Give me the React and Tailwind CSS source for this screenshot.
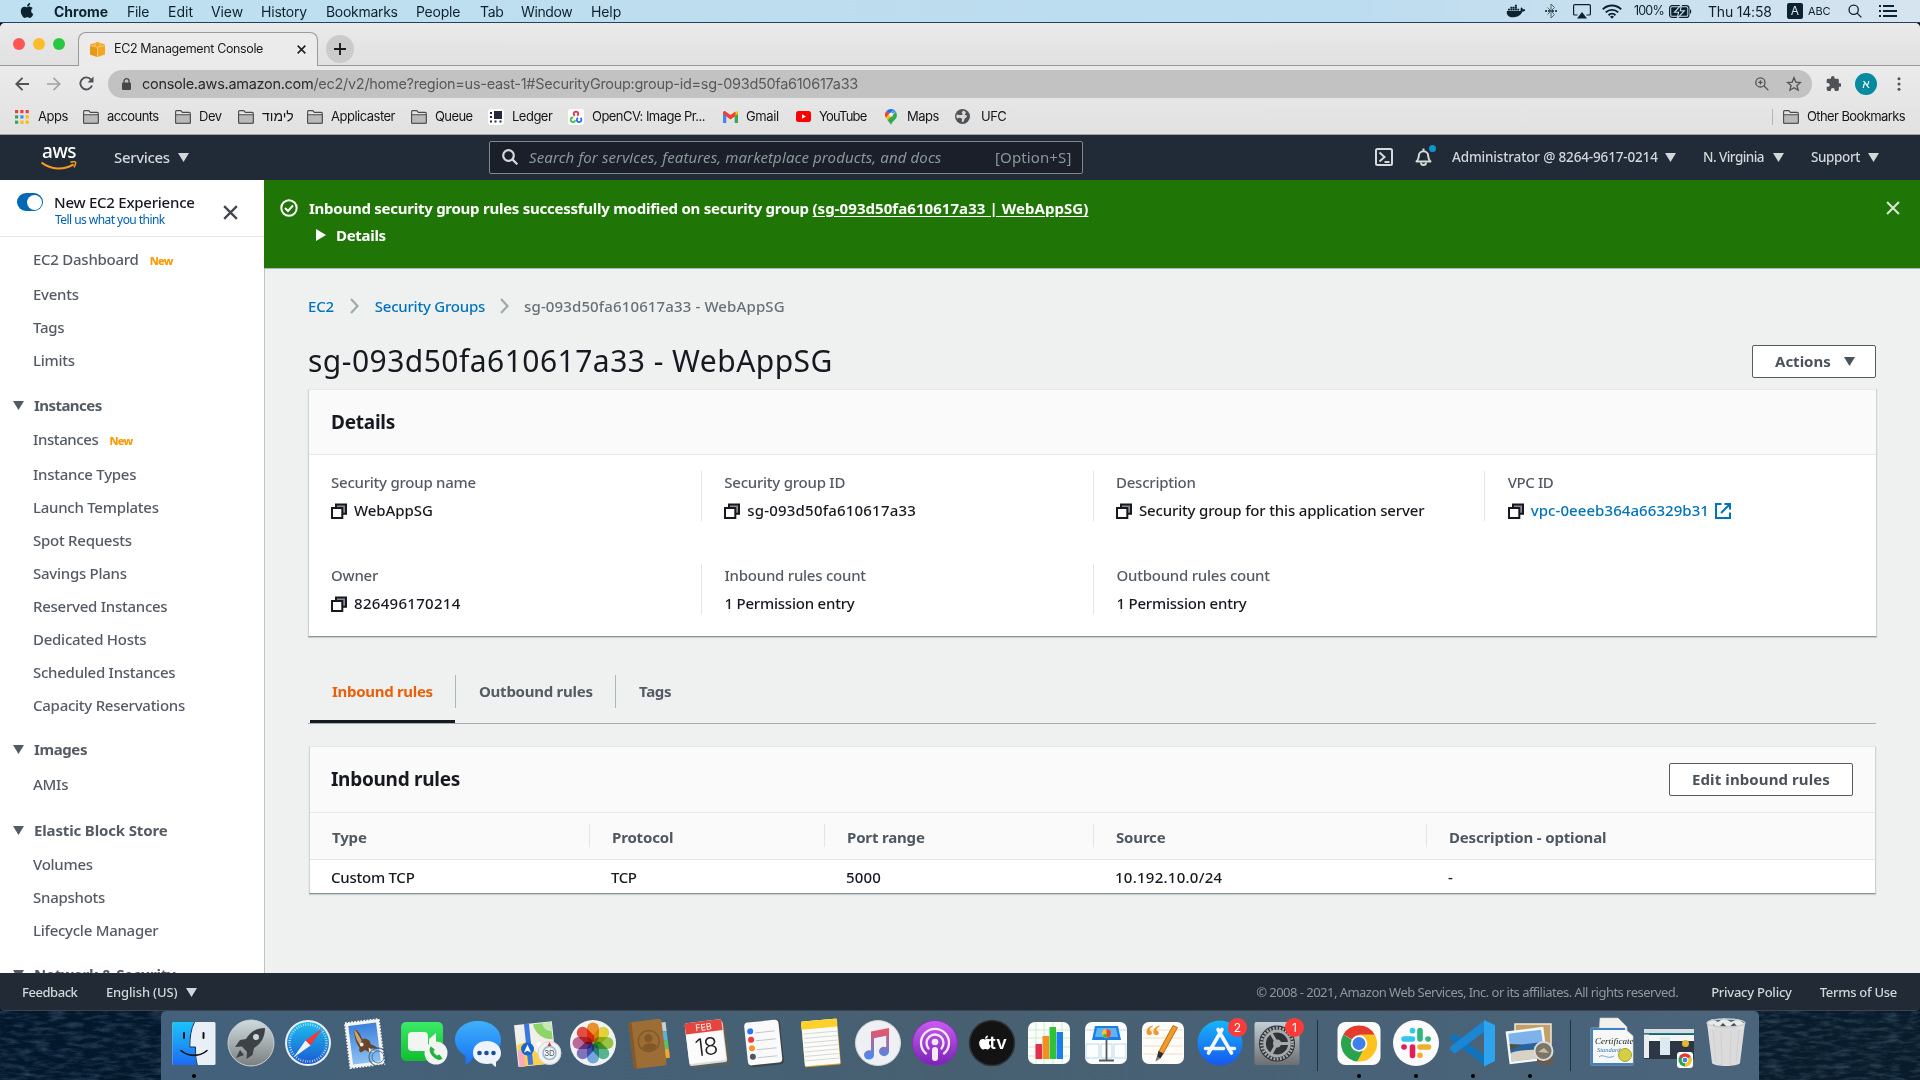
import React from "react";
import { FaApple, FaDocker } from "react-icons/fa";

/* ---------- small shared drawings ---------- */

function Caret({ className = "" }) {
  return (
    <svg viewBox="0 0 11 9" className={`h-[9px] w-[11px] shrink-0 ${className}`} fill="currentColor">
      <path d="M0 0h11L5.5 9z" />
    </svg>
  );
}

function Cross({ className = "", w = 2.4 }) {
  return (
    <svg viewBox="0 0 16 16" className={`shrink-0 ${className}`} fill="none" stroke="currentColor" strokeWidth={w}>
      <path d="M1.2 1.2l13.6 13.6M14.8 1.2L1.2 14.8" />
    </svg>
  );
}

function Folder() {
  return (
    <svg viewBox="0 0 16 14" className="h-[14px] w-4 shrink-0" stroke="#4c4c4c" strokeWidth="1.1">
      <path d="M.6 12.3V1.6c0-.6.4-1 1-1h4.2l1.6 1.8h6.9c.6 0 1 .4 1 1v8.9c0 .6-.4 1-1 1H1.6c-.6 0-1-.4-1-1z" fill="#e3e3e3" />
      <path d="M.6 4.8h14.7v7.5c0 .6-.4 1-1 1H1.6c-.6 0-1-.4-1-1z" fill="#b9b9b9" />
    </svg>
  );
}

function Copy() {
  return (
    <svg viewBox="0 0 16 16" className="h-4 w-4 shrink-0" fill="none" stroke="#16191f" strokeWidth="2">
      <path d="M5 4.5V1.5h10v9.3h-3" fill="#8a8d91" />
      <path d="M1 5h10.3v10H1z" fill="#fff" />
    </svg>
  );
}

function Magnifier({ className, w = 2 }) {
  return (
    <svg viewBox="0 0 16 16" className={className} fill="none" stroke="currentColor" strokeWidth={w}>
      <circle cx="6.5" cy="6.5" r="5.3" />
      <path d="M10.4 10.4l4.9 4.9" />
    </svg>
  );
}

/* ---------- macOS menu bar ---------- */

function MenuBar() {
  return (
    <div className="flex h-[23px] items-center border-b border-[#23435f] bg-linear-to-r from-[#bfe0f0] via-[#bcdcef] via-70% to-[#d6e4ef] text-[14px] text-[#0d2230]">
      <FaApple className="mb-px ml-[20px] h-[17px] w-[14px]" />
      <span className="ml-[20px] w-[73px] font-bold">Chrome</span>
      <span className="w-[41px] tracking-[-0.3px]">File</span>
      <span className="w-[43px]">Edit</span>
      <span className="w-[50px] tracking-[-0.1px]">View</span>
      <span className="w-[65px] tracking-[-0.2px]">History</span>
      <span className="w-[90px] tracking-[-0.3px]">Bookmarks</span>
      <span className="w-[64px] tracking-[-0.25px]">People</span>
      <span className="w-[41px] tracking-[-0.3px]">Tab</span>
      <span className="w-[70px] tracking-[-0.4px]">Window</span>
      <span className="tracking-[-0.1px]">Help</span>
      <FaDocker className="ml-auto mr-[20px] h-[18px] w-[18px] scale-x-[1.05]" />
      <svg viewBox="0 0 12 16" className="mr-[16px] h-4 w-3" fill="none" stroke="#51656f" strokeWidth="1">
        <path d="M2.500 4.500l7 7L6 15V1l3.500 3.500-7 7" />
        <path d="M1 8h.1M4 8h.1M7.900 8h.1M11 8h.1" stroke="#0d2230" strokeWidth="2" strokeLinecap="round" />
      </svg>
      <svg viewBox="0 0 18 15" className="mr-[11px] h-[15px] w-[18px]" fill="none" stroke="#0d2230" strokeWidth="1.2">
        <path d="M4.500 11H1.800C1 11 .6 10.600.6 10V2c0-.8.5-1.300 1.200-1.300h14.400c.7 0 1.200.5 1.200 1.300v8c0 .6-.4 1-1.200 1h-2.700" />
        <path d="M9 8l5 6.500H4z" fill="#0d2230" stroke="none" />
      </svg>
      <svg viewBox="0 0 20 15" className="mr-[12px] h-[15px] w-5" fill="none" stroke="#0d2230" strokeWidth="1.900">
        <path d="M.8 5.300a13 13 0 0118.400 0M3.700 8.400a9 9 0 0112.600 0M6.500 11.200a5 5 0 017 0" />
        <path d="M10 14.800l-2-2a2.900 2.900 0 014 0z" fill="#0d2230" stroke="none" />
      </svg>
      <span className="w-[35px] text-[12.500px] tracking-[-0.8px]">100%</span>
      <svg viewBox="0 0 23 13" className="mr-[16px] h-[13px] w-[23px]">
        <rect x=".6" y=".6" width="19.300" height="11.800" rx="2.500" fill="none" stroke="#0d2230" strokeWidth="1.200" />
        <rect x="2.200" y="2.200" width="16.100" height="8.600" rx="1" fill="#0d2230" />
        <path d="M21 4.200c1.700.4 1.700 4.200 0 4.600z" fill="#0d2230" />
        <path d="M12.500-.5L5.500 7.300h4L8.300 13.500l7-7.800h-4z" fill="#0d2230" stroke="#cfe1ee" strokeWidth="1.100" />
      </svg>
      <span className="w-[79px] tracking-[-0.2px]">Thu 14:58</span>
      <span className="flex h-4 w-4 items-center justify-center rounded-[2px] bg-[#0d2230] text-[12px] text-[#d3e4ef]">A</span>
      <span className="ml-[5px] w-[40px] text-[11px] tracking-[-0.200px]">ABC</span>
      <Magnifier className="mr-[17px] h-[14px] w-[14px]" w={1.500} />
      <svg viewBox="0 0 18 12" className="mr-[23px] h-3 w-[18px]" stroke="#0d2230" strokeWidth="1.900">
        <path d="M0 1h2M4 1h11M0 6h2M4 6h14M0 11h2M4 11h14" />
      </svg>
    </div>
  );
}

/* ---------- browser chrome ---------- */

function TabStrip() {
  return (
    <div className="flex h-[43px] items-end bg-linear-to-b from-[#eaeaea] to-[#e0e0e0]">
      <div className="flex h-full w-[79px] items-center gap-2 border-b border-[#9a9a9a] pb-[1px] pl-[13px]">
        <i className="h-3 w-3 rounded-full bg-[#fc5753]" />
        <i className="h-3 w-3 rounded-full bg-[#fdbc2c]" />
        <i className="h-3 w-3 rounded-full bg-[#27c83f]" />
      </div>
      <div className="-ml-px flex h-[34px] w-[240px] items-center rounded-t-[8px] border border-b-0 border-[#9a9a9a] bg-[#ebebeb] pb-px pl-[11px]">
        <svg viewBox="0 0 15 15" className="h-[15px] w-[15px]">
          <path d="M0 2.500L7.500 0 15 2.500v10L7.500 15 0 12.500z" fill="#f4a623" />
          <path d="M7.500 5v10L0 12.500V3.500z" fill="#e39a1b" />
          <path d="M5 .8v3M10 .8v3M0 3.500l7.500 1.700L15 3.500M7.500 5v10" stroke="#fbd38a" strokeWidth=".8" fill="none" />
        </svg>
        <span className="ml-[9px] w-[183px] text-[12.500px] tracking-[-0.370px] text-[#1c1c1c]">EC2 Management Console</span>
        <Cross className="h-[9px] w-[9px] text-[#222]" w={2.900} />
      </div>
      <div className="flex h-full flex-1 items-center border-b border-[#9a9a9a] pl-[8px] pt-[9px]">
        <span className="flex h-7 w-7 items-center justify-center rounded-full bg-[#cbcbcb]">
          <svg viewBox="0 0 12 12" className="h-3 w-3" stroke="#1a1a1a" strokeWidth="1.900"><path d="M6 0v12M0 6h12" /></svg>
        </span>
      </div>
    </div>
  );
}

function Toolbar() {
  return (
    <div className="flex h-9 items-center pb-[1px] text-[#4f5357]">
      <svg viewBox="0 0 14 14" className="ml-[15px] h-[14px] w-[14px]" fill="none" stroke="currentColor" strokeWidth="1.900"><path d="M14 7H1.500M7.500.8L1.300 7l6.200 6.200" /></svg>
      <svg viewBox="0 0 14 14" className="ml-[18px] h-[14px] w-[14px]" fill="none" stroke="#a3a3a3" strokeWidth="1.700"><path d="M0 7h12.500M6.500.8L12.700 7l-6.200 6.200" /></svg>
      <svg viewBox="0 0 15 15" className="ml-[18px] h-[15px] w-[15px]" fill="none" stroke="currentColor" strokeWidth="1.900">
        <path d="M13 9.500A6 6 0 1112 3.600" /><path d="M14.500.5v6H8.500z" fill="currentColor" stroke="none" />
      </svg>
      <div className="ml-[14px] flex h-7 w-[1704px] items-center rounded-full bg-[#c2c2c2] pl-[14px]">
        <svg viewBox="0 0 9 12" className="h-3 w-[9px]">
          <path d="M2 5V3.200a2.500 2.500 0 015 0V5" fill="none" stroke="#45484b" strokeWidth="1.300" />
          <rect y="4.500" width="9" height="7.500" rx="1" fill="#45484b" />
        </svg>
        <span className="ml-[11px] whitespace-nowrap text-[14.500px] tracking-[-0.290px] text-[#57595b]">
          <span className="text-[#27292b]">console.aws.amazon.com</span>/ec2/v2/home?region=us-east-1#SecurityGroup:group-id=sg-093d50fa610617a33
        </span>
        <svg viewBox="0 0 14 14" className="ml-auto h-[14px] w-[14px]" fill="none" stroke="currentColor" strokeWidth="1.300">
          <circle cx="5.400" cy="5.400" r="4.600" /><path d="M8.800 8.800l4.600 4.600M5.400 3.200v4.400M3.200 5.400h4.400" />
        </svg>
        <svg viewBox="0 0 24 24" className="ml-[17px] mr-[10px] h-[16px] w-[16px]" fill="none" stroke="currentColor" strokeWidth="2">
          <path d="M12 2.500l2.700 6.600 7.100.6-5.400 4.700 1.700 6.900-6.100-3.700-6.100 3.700 1.700-6.900L2.200 9.700l7.100-.6z" />
        </svg>
      </div>
      <svg viewBox="1 1 21 21" className="ml-[14px] h-[15px] w-[15px]" fill="currentColor">
        <path d="M20.500 11H19V7a2 2 0 00-2-2h-4V3.500a2.500 2.500 0 00-5 0V5H4a2 2 0 00-2 2v3.800h1.500a2.700 2.700 0 010 5.400H2V20a2 2 0 002 2h3.800v-1.500a2.700 2.700 0 015.400 0V22H17a2 2 0 002-2v-4h1.500a2.500 2.500 0 000-5z" />
      </svg>
      <span className="ml-[14px] flex h-[22px] w-[22px] items-center justify-center rounded-full bg-[#068a9f] text-[12px] text-white">א</span>
      <svg viewBox="0 0 4 14" className="ml-[20px] h-[14px] w-1" fill="currentColor">
        <circle cx="2" cy="1.800" r="1.500" /><circle cx="2" cy="7" r="1.500" /><circle cx="2" cy="12.200" r="1.500" />
      </svg>
    </div>
  );
}

function Bookmark({ icon, label, className }) {
  return (
    <div className="flex items-center gap-2 whitespace-nowrap">
      <span className="flex w-4 justify-center">{icon}</span>
      <span className={className}>{label}</span>
    </div>
  );
}

const appDots = ["#ea4335", "#ea4335", "#ea4335", "#34a853", "#4285f4", "#fbbc04", "#34a853", "#fbbc04", "#fbbc04"];

function BookmarksBar() {
  return (
    <div className="flex h-[33px] items-center gap-4 border-b border-[#a8a3a0] pb-[3px] pl-[13px] pr-[15px] text-[13px] text-[#161616]">
      <div className="flex items-center">
        <svg viewBox="0 0 14 14" className="ml-[2px] h-[14px] w-[14px]">
          {appDots.map((c, i) => <rect key={i} x={(i % 3) * 5.300} y={Math.floor(i / 3) * 5.300} width="3.200" height="3.200" fill={c} />)}
        </svg>
        <span className="ml-[9px] w-[29px] tracking-[-0.500px]">Apps</span>
      </div>
      <Bookmark icon={<Folder />} label="accounts" className="w-[52px] tracking-[-0.600px]" />
      <Bookmark icon={<Folder />} label="Dev" className="w-[23px] tracking-[-0.500px]" />
      <Bookmark icon={<Folder />} label="לימוד" className="w-[29px] font-['Liberation_Sans'] text-[14px]" />
      <Bookmark icon={<Folder />} label="Applicaster" className="w-[64px] tracking-[-0.500px]" />
      <Bookmark icon={<Folder />} label="Queue" className="w-[37px] tracking-[-0.600px]" />
      <Bookmark
        icon={<svg viewBox="0 0 16 16" className="h-4 w-4"><rect width="16" height="16" rx="3" fill="#fff" /><path d="M6 2h8v8H6z" fill="#26293b" /><path d="M2 3h2v2H2zM2 7h2v2H2zM2 11.500h2v2H2zM6.500 11.500h2v2h-2zM11.500 11.500h2v2h-2z" fill="#26293b" /></svg>}
        label="Ledger" className="w-[40px] tracking-[-0.500px]" />
      <Bookmark
        icon={<svg viewBox="0 0 16 16" className="h-4 w-4" fill="none" strokeWidth="1.800"><rect width="16" height="16" rx="3" fill="#fff" /><path d="M6.800 6.800a2.300 2.300 0 112.400 0" stroke="#e8304a" /><path d="M5.300 8.500a2.300 2.300 0 102 2.800" stroke="#3fc14c" /><path d="M10 8.800a2.300 2.300 0 102.500.2" stroke="#2f6bf0" /></svg>}
        label="OpenCV: Image Pr..." className="w-[114px] tracking-[-0.540px]" />
      <Bookmark
        icon={<svg viewBox="0 0 15 12" className="h-3 w-[15px]"><path d="M0 1.500V12h3.300V5z" fill="#4285f4" /><path d="M15 1.500V12h-3.300V5z" fill="#34a853" /><path d="M11.700 1.200L15 0v3l-3.300 2.500z" fill="#fbbc04" /><path d="M0 2.800V1.500C0 .2 1.500-.5 2.600.4L7.500 4l4.900-3.600.1 4.500L7.500 8.600 0 3z" fill="#ea4335" /></svg>}
        label="Gmail" className="w-[33px] tracking-[-0.400px]" />
      <Bookmark
        icon={<svg viewBox="0 0 15 11" className="h-[11px] w-[15px]"><rect width="15" height="11" rx="2.500" fill="#f00" /><path d="M6 3.200v4.600l4-2.300z" fill="#fff" /></svg>}
        label="YouTube" className="w-[48px] tracking-[-0.850px]" />
      <Bookmark
        icon={<svg viewBox="0 0 12 16" className="h-4 w-3"><path d="M6 0a6 6 0 00-4.500 2l3 2.500L9 .8A6 6 0 006 0z" fill="#1a73e8" /><path d="M1.500 2A6 6 0 001 9l3.500-4.500z" fill="#ea4335" /><path d="M9 .8L4.200 6.500a2 2 0 013.500-2l3-1.800A6 6 0 009 .8z" fill="#4285f4" /><path d="M1 9l1.500 2.300L7.500 7A2.200 2.200 0 014.200 5z" fill="#fbbc04" /><path d="M10.900 2.800L2.500 11.300C4 13 5 14 6 16c1-3 3-4 4.700-6.200 1.500-2 1.700-4.600.2-7z" fill="#34a853" /><circle cx="6" cy="5.800" r="2" fill="#e9eef5" /></svg>}
        label="Maps" className="w-[31px] tracking-[-0.500px]" />
      <Bookmark
        icon={<svg viewBox="0 0 16 16" className="h-[15px] w-[15px]"><circle cx="8" cy="8" r="8" fill="#505356" /><path d="M9 1.500C7 3 6.500 4 8.500 5.500 6 7 4 6.500 2 5.500c-.8 1.800-.6 3 .2 4.500 1.500-1 3.500-1 5 0 1 1-.7 2.500.5 4 3-.5 1.600-3.800 3.500-4.500S13.500 7 11 6.500c-1.500-.5 1-1.500.5-3S9.500 2.500 9 1.500z" fill="#d9d9d9" /></svg>}
        label="UFC" className="ml-[3px] tracking-[-0.500px]" />
      <div className="ml-auto flex h-4 items-center border-l border-[#b5b5b5] pl-[10px]">
        <Folder />
        <span className="ml-2 whitespace-nowrap tracking-[-0.600px]">Other Bookmarks</span>
      </div>
    </div>
  );
}

/* ---------- AWS console ---------- */

function AwsNav() {
  return (
    <div className="flex h-[45px] items-center bg-[#212b37] pb-[1px] text-[13.500px] font-medium text-[#d2d7d9]">
      <div className="ml-[41px] flex w-9 flex-col items-center text-white">
        <span className="h-[16px] text-[19px] font-medium leading-[13px] tracking-[-0.500px]">aws</span>
        <svg viewBox="0 0 36 9" className="h-[9px] w-9" fill="none" stroke="#f79b1e" strokeWidth="2.100">
          <path d="M.5 1.500c10 7.500 22 7.800 32 1.800" /><path d="M29.500 1.200c2.800-.8 4.700-.6 5 .1.400.9-.3 3-1.500 5" strokeWidth="1.600" />
        </svg>
      </div>
      <span className="ml-[37px] w-[64px] text-[15px] tracking-[-0.350px]">Services</span>
      <Caret className="mr-[300px]" />
      <div className="flex h-[33px] w-[594px] items-center rounded-[2px] border border-[#7d898b] bg-[#1a1f29] text-[15px] font-normal text-[#8b9798]">
        <Magnifier className="ml-[12px] h-4 w-4 text-[#d5dbdb]" w={2.200} />
        <span className="ml-[11px] w-[466px] italic tracking-[0.110px]">Search for services, features, marketplace products, and docs</span>
        <span className="tracking-[0.120px]">[Option+S]</span>
      </div>
      <svg viewBox="0 0 18 18" className="ml-[292px] h-[18px] w-[18px]" fill="none" stroke="#d5dbdb" strokeWidth="2">
        <rect x="1" y="1" width="16" height="16" rx="1.500" /><path d="M4.500 4.500L9.500 9l-5 4.500M9.500 14h5" />
      </svg>
      <span className="relative ml-[22px] w-[37px]">
        <svg viewBox="0 0 17 18" className="h-[18px] w-[17px]" fill="none" stroke="#d5dbdb" strokeWidth="2">
          <path d="M8.500.5v3M1.500 13.500c2-2 2.300-3 2.300-5.500a4.700 4.700 0 019.400 0c0 2.500.3 3.500 2.300 5.500z" strokeLinejoin="round" />
          <path d="M6 14.500a2.500 2.500 0 005 0" />
        </svg>
        <i className="absolute -top-[3px] left-[14px] h-[7px] w-[7px] rounded-full bg-[#0a98c9]" />
      </span>
      <span className="w-[213px] whitespace-nowrap tracking-[-0.150px]">Administrator @ 8264-9617-0214</span>
      <Caret className="mr-[27px]" />
      <span className="w-[70px] whitespace-nowrap tracking-[-0.550px]">N. Virginia</span>
      <Caret className="mr-[27px]" />
      <span className="w-[57px] tracking-[-0.400px]">Support</span>
      <Caret />
    </div>
  );
}

function NavItem({ label, isNew, className = "h-[33px]" }) {
  return (
    <li className={`flex shrink-0 items-center pl-[33px] ${className}`}>
      {label}
      {isNew && <span className="ml-[11px] mt-[3px] text-[11px] font-extrabold tracking-[-0.700px] text-[#ff9900]">New</span>}
    </li>
  );
}

function NavHeader({ label, className = "" }) {
  return (
    <li className={`mb-px mt-[11.500px] flex h-[33px] shrink-0 items-center pl-[13px] font-bold ${className}`}>
      <Caret className="mr-[10px]" />
      {label}
    </li>
  );
}

function Sidebar() {
  return (
    <aside className="flex w-[264px] shrink-0 flex-col overflow-hidden bg-white">
      <div className="flex h-[57px] shrink-0 border-b border-[#e6e8e8]">
        <span className="ml-[17px] mt-[13px] flex h-[18px] w-[26px] justify-end rounded-full bg-[#0068b5] p-[1.500px]">
          <i className="h-[15px] w-[15px] rounded-full bg-white" />
        </span>
        <div className="ml-[11px] mt-[12px] w-[169px] whitespace-nowrap">
          <p className="text-[15px] leading-[21px] font-medium tracking-[-0.250px] text-[#16191f]">New EC2 Experience</p>
          <p className="ml-px text-[12px] leading-[14px] tracking-[-0.550px] text-[#0060b0]">Tell us what you think</p>
        </div>
        <Cross className="mt-[25px] h-[15px] w-[15px] text-[#3f464f]" />
      </div>
      <ul className="flex flex-col pt-[4px] text-[15px] font-medium tracking-[-0.260px] text-[#545b64]">
        <NavItem label="EC2 Dashboard" isNew className="h-[37px]" />
        <NavItem label="Events" />
        <NavItem label="Tags" />
        <NavItem label="Limits" />
        <NavHeader label="Instances" className="tracking-[-0.550px]" />
        <NavItem label="Instances" isNew className="-mt-px h-[36px] tracking-[-0.400px]" />
        <NavItem label="Instance Types" />
        <NavItem label="Launch Templates" />
        <NavItem label="Spot Requests" />
        <NavItem label="Savings Plans" />
        <NavItem label="Reserved Instances" />
        <NavItem label="Dedicated Hosts" />
        <NavItem label="Scheduled Instances" />
        <NavItem label="Capacity Reservations" />
        <NavHeader label="Images" className="tracking-[-0.400px]" />
        <NavItem label="AMIs" className="h-[35px]" />
        <NavHeader label="Elastic Block Store" className="tracking-[-0.150px]" />
        <NavItem label="Volumes" />
        <NavItem label="Snapshots" />
        <NavItem label="Lifecycle Manager" />
        <NavHeader label="Network & Security" />
      </ul>
    </aside>
  );
}

function Banner() {
  return (
    <div className="h-[89px] border-b border-[#aab7b8] bg-[#1f7607] text-[15px] font-bold text-white">
      <div className="flex items-center pt-[17px]">
        <svg viewBox="0 0 18 18" className="ml-[16px] h-[18px] w-[18px]" fill="none" stroke="currentColor" strokeWidth="2">
          <circle cx="9" cy="9" r="7.700" /><path d="M5 9l3 3 5-5.500" />
        </svg>
        <span className="ml-[11px] leading-[22px] tracking-[-0.255px]">
          Inbound security group rules successfully modified on security group{" "}
          <span className="tracking-[0.060px] underline underline-offset-2">(sg-093d50fa610617a33 | WebAppSG)</span>
        </span>
        <Cross className="ml-auto mr-[20px] h-[14px] w-[14px] text-[#d9e6d5]" />
      </div>
      <div className="mt-[5px] flex items-center pl-[52px]">
        <svg viewBox="0 0 10 12" className="h-3 w-[10px]" fill="currentColor"><path d="M0 0l10 6-10 6z" /></svg>
        <span className="ml-[10px] leading-[22px] tracking-[-0.300px]">Details</span>
      </div>
    </div>
  );
}

function Chevron({ className }) {
  return (
    <svg viewBox="0 0 9 16" className={`h-4 w-[9px] ${className}`} fill="none" stroke="#9fabab" strokeWidth="2.200"><path d="M1 1l6.500 7L1 15" /></svg>
  );
}

function Field({ label, children, first, track = "", labelTrack = "tracking-[-0.240px]" }) {
  return (
    <div className={`flex h-[50px] flex-col justify-between whitespace-nowrap ${first ? "w-[392px] pl-[22px]" : "w-[392px] border-l border-[#e3e6e6] pl-[22.500px]"}`}>
      <span className={`mt-px leading-[21px] text-[#545b64] ${labelTrack}`}>{label}</span>
      <span className={`flex items-center gap-[7px] leading-[21px] text-[#16191f] ${track}`}>{children}</span>
    </div>
  );
}

const panel = "border border-x-[#cdd4d4] border-t-[#e4e8e8] border-b-[#84959a] bg-white shadow-[0_1px_1px_rgba(0,28,36,0.15)]";

function DetailsPanel() {
  return (
    <section className={`ml-[43px] w-[1569px] text-[15px] ${panel}`}>
      <h2 className="flex h-[65px] items-center border-b border-[#e6e9e9] bg-[#fafafa] pl-[22px] text-[19px] font-bold tracking-[-0.250px] text-[#16191f]">Details</h2>
      <div className="flex pt-4 font-medium">
        <Field first label="Security group name" track="tracking-[-0.050px]"><Copy />WebAppSG</Field>
        <Field label="Security group ID" track="tracking-[0.200px]"><Copy />sg-093d50fa610617a33</Field>
        <Field label="Description" track="tracking-[-0.170px]"><Copy />Security group for this application server</Field>
        <Field label="VPC ID" labelTrack="tracking-[-0.400px]">
          <Copy />
          <span className="tracking-[0.070px] text-[#0073bb]">vpc-0eeeb364a66329b31</span>
          <svg viewBox="0 0 16 16" className="-ml-[1px] h-4 w-4" fill="none" stroke="#0073bb" strokeWidth="2">
            <path d="M6.500 1H1v14h14V9.500M9.500 1H15v5.500M14.800 1.200L6 10" />
          </svg>
        </Field>
      </div>
      <div className="flex pt-[43px] pb-[22px] font-medium">
        <Field first label="Owner" track="tracking-[0.300px]"><Copy />826496170214</Field>
        <Field label="Inbound rules count" track="tracking-[-0.220px]">1 Permission entry</Field>
        <Field label="Outbound rules count" track="tracking-[-0.220px]">1 Permission entry</Field>
      </div>
    </section>
  );
}

function Tabs() {
  return (
    <div className="ml-[43px] mt-[29px] flex h-[58px] w-[1568px] border-b border-[#a3b0b1] text-[15px] font-bold text-[#545b64]">
      <div className="ml-[2px] flex w-[145px] flex-col justify-end border-b-3 border-[#16191f] text-[#eb5f07]">
        <span className="mb-[18px] pl-[22px] leading-[22px] tracking-[-0.300px]">Inbound rules</span>
      </div>
      <div className="mt-[9px] flex h-[33px] w-[161px] items-center border-x border-[#aab7b8] pl-[23px] tracking-[-0.250px]">Outbound rules</div>
      <div className="mt-[9px] flex h-[33px] items-center pl-[23px] tracking-[-0.300px]">Tags</div>
    </div>
  );
}

const cols = "grid grid-cols-[280px_235px_269px_333px_1fr]";

function RulesPanel() {
  const heads = ["Type", "Protocol", "Port range", "Source", "Description - optional"];
  return (
    <section className={`ml-[44px] mt-[22px] w-[1567px] text-[15px] ${panel}`}>
      <div className="flex h-[66px] items-center justify-between border-b border-[#e6e9e9] bg-[#fafafa] pl-[21px] pr-[22px]">
        <h2 className="text-[19px] font-bold tracking-[-0.280px] text-[#16191f]">Inbound rules</h2>
        <button className="h-[33px] w-[184px] rounded-[2px] border border-[#545b64] bg-white font-bold tracking-[0.100px] text-[#4a525b]">Edit inbound rules</button>
      </div>
      <div className={`${cols} h-[47px] items-center border-b border-[#e3e6e6] bg-[#fafafa] font-bold tracking-[-0.170px] text-[#4f5761]`}>
        {heads.map((h, i) => (
          <span key={h} className={`mb-[2px] flex h-[23px] items-center border-r pl-[22px] ${i < 4 ? "border-[#e3e6e6]" : "border-transparent"}`}>
            <span className="mt-[4px]">{h}</span>
          </span>
        ))}
      </div>
      <div className={`${cols} h-[33px] items-center pt-[1px] font-medium text-[#16191f]`}>
        <span className="pl-[21px] tracking-[-0.250px]">Custom TCP</span>
        <span className="pl-[21px] tracking-[-0.400px]">TCP</span>
        <span className="pl-[21px] tracking-[0.200px]">5000</span>
        <span className="pl-[21px] tracking-[0.250px]">10.192.10.0/24</span>
        <span className="pl-[21px]">-</span>
      </div>
    </section>
  );
}

function Main() {
  return (
    <main className="flex flex-1 flex-col bg-[#eff1f1]">
      <Banner />
      <div className="flex-1 border-l border-[#bcc4c6]">
        <nav className="flex items-center pl-[43px] pt-[26px] text-[15px] leading-[22px] font-medium tracking-[-0.230px] text-[#0073bb]">
          EC2
          <Chevron className="mx-[16px]" />
          Security Groups
          <Chevron className="mx-[15px]" />
          <span className="tracking-[0.130px] text-[#687078]">sg-093d50fa610617a33 - WebAppSG</span>
        </nav>
        <div className="flex h-[72px] items-end justify-between pl-[43px] pr-[44px]">
          <h1 className="mb-[8px] text-[30px] leading-[40px] tracking-[0.470px] text-[#16191f]">sg-093d50fa610617a33 - WebAppSG</h1>
          <button className="mb-[11px] flex h-[33px] w-[124px] items-center rounded-[2px] border border-[#545b64] bg-white pl-[22px] text-[15px] font-bold text-[#4a525b]">
            Actions
            <Caret className="ml-[13px]" />
          </button>
        </div>
        <DetailsPanel />
        <Tabs />
        <RulesPanel />
      </div>
    </main>
  );
}

function Footer() {
  return (
    <footer className="flex h-[38px] items-center rounded-b-[5px] border-b border-[#3b4450] bg-[#222a36] pt-[2px] text-[13px] font-medium text-[#d2d7d9]">
      <span className="ml-[22px] w-[84px] tracking-[-0.450px]">Feedback</span>
      <span className="w-[80px] tracking-[-0.150px]">English (US)</span>
      <Caret className="h-[8px] w-[10px]" />
      <span className="ml-auto mr-[33px] font-normal tracking-[-0.530px] text-[#8d999b]">© 2008 - 2021, Amazon Web Services, Inc. or its affiliates. All rights reserved.</span>
      <span className="mr-[28px] tracking-[-0.250px]">Privacy Policy</span>
      <span className="mr-[23px] tracking-[-0.280px]">Terms of Use</span>
    </footer>
  );
}

/* ---------- Dock ---------- */

function Icon({ children }) {
  return <svg viewBox="0 0 50 50" className="h-[50px] w-[50px] overflow-visible">{children}</svg>;
}

const petals = ["#f88e1d", "#ecdc2c", "#9bcb3a", "#4fb98c", "#6ea9e6", "#7d6cc0", "#c2629f", "#ee4136"];

const dockIcons = {
  finder: (
    <Icon>
      <rect x="3.500" y="4" width="43" height="43" rx="1.500" fill="#e9eff6" />
      <path d="M5 4h20c-3 7-4.500 15-4.500 25h5.500c0 7 .5 13 2 18H5a1.500 1.500 0 01-1.500-1.500v-40A1.500 1.500 0 015 4z" fill="url(#finder)" />
      <path d="M25.500 4c-3.500 7-4.700 15-4.700 25h5.700c0 7 .2 13 1.800 18" fill="none" stroke="#12305a" strokeWidth="1" />
      <path d="M15 15v5M34.500 15v5" stroke="#111" strokeWidth="2" strokeLinecap="round" />
      <path d="M12 32.500c7 6.500 19 6.500 26 0" fill="none" stroke="#111" strokeWidth="1.600" strokeLinecap="round" />
    </Icon>
  ),
  launchpad: (
    <Icon>
      <circle cx="25" cy="25" r="23" fill="url(#silver)" stroke="#c9ced1" strokeWidth="1" />
      <path d="M39 10c-9 0-15 4-19 11l-6 1-5 7 7-.5 5 5.500-.5 7 6-4 1.500-7c7-4 11-11 11-20z" fill="#3d4246" />
      <circle cx="30" cy="19" r="3" fill="#cfd6d9" /><path d="M14 32l-4 8 8-3z" fill="#3d4246" />
    </Icon>
  ),
  safari: (
    <Icon>
      <circle cx="25" cy="25" r="23" fill="#eceff1" /><circle cx="25" cy="25" r="21" fill="url(#safari)" />
      <circle cx="25" cy="25" r="18.500" fill="none" stroke="#d8ecfa" strokeWidth="2.500" strokeDasharray=".7 1.700" />
      <path d="M39.500 10.500L22.500 22.500l5 5z" fill="#f13a35" /><path d="M10.500 39.500l12-17 5 5z" fill="#f2f2f2" />
    </Icon>
  ),
  mail: (
    <Icon>
      <g transform="rotate(-7 25 25)">
        <rect x="7.500" y="3" width="34" height="45" fill="#f4f4f2" stroke="#f4f4f2" strokeWidth="2" strokeDasharray="1.800 1.300" />
        <rect x="10.500" y="6" width="28" height="39" fill="url(#sky)" />
        <path d="M16 10c4 2 6 6 6.500 11 5-1 8 2 8 6 3 1 5 3 6.500 5l-6-1-2 4-5-3-4 2c-2-1-2-3-1-5-3-5-4-12-3-19z" fill="#68452a" />
        <path d="M16 10c3 4 4 8 6 12l-2 4c-3-4-4-10-4-16z" fill="#c9a877" />
        <circle cx="21.500" cy="26" r="2" fill="#f0eadf" /><path d="M28 30l6 5-6-.500z" fill="#e8e0d2" />
      </g>
      <circle cx="38" cy="39" r="9" fill="none" stroke="#3b5068" strokeWidth="1.300" opacity=".7" /><circle cx="38" cy="39" r="6" fill="none" stroke="#3b5068" opacity=".7" />
    </Icon>
  ),
  facetime: (
    <Icon>
      <rect x="4" y="4" width="42" height="39" rx="5" fill="url(#green)" />
      <rect x="11" y="14" width="20" height="19" rx="4" fill="#f2f5f2" /><path d="M32 21l7-6v16l-7-4z" fill="#f2f5f2" />
      <circle cx="39" cy="35" r="11.500" fill="#f2f4f2" />
      <path d="M34 28.500c-2.500 2-1.500 6.500 2 10s7.500 4.500 9.500 2l-3-4-2.500 1c-1.700-.8-2.800-2.200-3.500-4l1.300-2z" fill="#1fb53b" />
    </Icon>
  ),
  messages: (
    <Icon>
      <path d="M24 3c13 0 23 8 23 19S37 40 24 40c-2 0-3-.2-5-.6-2 4-6 7-8 7 1-3 1-6 0-9C5 34 1 28 1 22 1 11 11 3 24 3z" fill="url(#blue)" />
      <path d="M33 23c8 0 14 5 14 12 0 4-2 7-5 9v5c-2-.7-3-2-4-3.500-11 2-19-3-19-10.500S25 23 33 23z" fill="#eef4fb" />
      <circle cx="25.500" cy="35" r="2.300" fill="#1d4f93" /><circle cx="32.500" cy="35" r="2.300" fill="#1d4f93" /><circle cx="39.500" cy="35" r="2.300" fill="#1d4f93" />
    </Icon>
  ),
  maps: (
    <Icon>
      <g transform="rotate(-6 25 25)">
        <rect x="5" y="5" width="38" height="42" fill="#f1efe9" />
        <path d="M24 6h18v17C31 22 25 15 24 6z" fill="#8fd46a" /><path d="M33 6h9v9c-6-1-8-4-9-9z" fill="#c8e8b6" />
        <path d="M6 25l9-2 10 12 17 5v7H6z" fill="#fbd14c" /><path d="M6 30l6 4v13H6z" fill="#f5a9c3" /><path d="M15 5h5v41h-5z" fill="#3b78dd" />
        <path d="M28 24c5 4 9 5 14 5v7c-8-1-13-4-18-10z" fill="#fff" />
      </g>
      <circle cx="16.500" cy="31" r="6.500" fill="#1667cf" /><path d="M16.500 26.500l3.500 8-3.500-1.700-3.500 1.700z" fill="#fff" />
      <circle cx="38.500" cy="35" r="11.500" fill="#f0f2f3" stroke="#d2d6d8" /><circle cx="38.500" cy="35" r="6.500" fill="none" stroke="#9db7cd" strokeWidth="1.500" />
      <text x="38.500" y="38" textAnchor="middle" fontSize="8" fill="#4c5960">3D</text><path d="M38.500 24l2 4h-4z" fill="#e2352d" />
    </Icon>
  ),
  photos: (
    <Icon>
      <circle cx="25" cy="25" r="23" fill="#f1f2f2" />
      {petals.map((c, i) => <rect key={c} x="19" y="4.500" width="12" height="20" rx="6" fill={c} opacity=".92" className="mix-blend-multiply" transform={`rotate(${i * 45} 25 25)`} />)}
    </Icon>
  ),
  contacts: (
    <Icon>
      <g transform="rotate(-7 25 25)">
        <rect x="38" y="6" width="5" height="9" fill="#c9ced2" /><rect x="38" y="15" width="5" height="9" fill="#5bb3d9" /><rect x="38" y="24" width="5" height="9" fill="#5fbf63" /><rect x="38" y="33" width="5" height="9" fill="#f0a62f" />
        <rect x="6" y="2" width="33" height="47" rx="2.500" fill="#9c6d35" /><rect x="6" y="2" width="3" height="47" rx="1.500" fill="#86592a" />
        <circle cx="24" cy="23" r="10.500" fill="none" stroke="#825829" strokeWidth="1.300" /><circle cx="24" cy="20" r="4" fill="#825829" /><path d="M16.500 29c2-5 13-5 15 0-4 5-11 5-15 0z" fill="#825829" />
      </g>
    </Icon>
  ),
  calendar: (
    <Icon>
      <g transform="rotate(-7 25 25)">
        <rect x="7" y="8" width="39" height="41" rx="2" fill="#59605d" /><rect x="5" y="5" width="38" height="41" rx="2" fill="#dcdcdc" /><rect x="5" y="3" width="37" height="41" rx="2" fill="#fbfbfb" />
        <path d="M7 3h33a2 2 0 012 2v9H5V5a2 2 0 012-2z" fill="#e6453d" />
        <text x="23.500" y="12" textAnchor="middle" fontSize="9" fill="#fff">FEB</text>
        <text x="23.500" y="37" textAnchor="middle" fontSize="24" fontWeight="300" letterSpacing="-1" fill="#222">18</text>
      </g>
    </Icon>
  ),
  reminders: (
    <Icon>
      <g transform="rotate(-6 25 25)">
        <rect x="8" y="3" width="35" height="45" rx="4" fill="#3e464c" /><rect x="7" y="3" width="34.500" height="43" rx="4" fill="#fafafa" />
        <path d="M17 14h20M17 22h20M17 31h20M17 39h20" stroke="#c3c6c9" />
        <circle cx="12.500" cy="12" r="3" fill="#2d73f5" /><circle cx="12.500" cy="20.500" r="3" fill="#ee3e35" /><circle cx="12.500" cy="29" r="3" fill="#f8942b" /><circle cx="12.500" cy="37.500" r="3" fill="#505860" />
      </g>
    </Icon>
  ),
  notes: (
    <Icon>
      <g transform="rotate(-5 25 25)">
        <rect x="7" y="2" width="36" height="46" rx="1.500" fill="#d9a928" /><rect x="7" y="2" width="35.500" height="45" rx="1.500" fill="#fbfbf9" /><path d="M7 2h35.500v8H7z" fill="#fdd02c" />
        <path d="M8 14.500h34M8 19h34M8 23.500h34M8 28h34M8 32.500h34M8 37h34M8 41.500h34" stroke="#cfcfcf" strokeWidth=".8" />
      </g>
    </Icon>
  ),
  music: (
    <Icon>
      <circle cx="25" cy="25" r="22.500" fill="#eff0f4" stroke="#d4d7dd" />
      <path d="M18 13.500L36 10v23.500a5 4.700 0 11-2.800-4.300V17.800L21 20.300v16.700a5 4.700 0 11-3-4.400z" fill="url(#note)" />
    </Icon>
  ),
  podcasts: (
    <Icon>
      <circle cx="25" cy="25" r="22.500" fill="url(#purple)" stroke="#8430b2" />
      <path d="M16 35.500a14 14 0 1118 0" fill="none" stroke="#f3e9f8" strokeWidth="2.300" strokeLinecap="round" />
      <path d="M18.500 30.500a8.500 8.500 0 1113 0" fill="none" stroke="#f3e9f8" strokeWidth="2.300" strokeLinecap="round" />
      <circle cx="25" cy="24" r="3.300" fill="#f3e9f8" /><rect x="22" y="29" width="6" height="14" rx="3" fill="#f3e9f8" />
    </Icon>
  ),
  tv: (
    <Icon>
      <circle cx="25" cy="25" r="22.500" fill="#131313" stroke="#2d3338" strokeWidth="1.500" />
      <FaApple x="10" y="16.500" width="12" height="14" color="#fff" />
      <text x="22.500" y="30.500" fontSize="18" fontWeight="600" fill="#fff">tv</text>
    </Icon>
  ),
  numbers: (
    <Icon>
      <rect x="4" y="4" width="42" height="42" rx="7" fill="#fbfdfb" />
      <path d="M12 4v42M20 4v42M29 4v42M38 4v42M4 12h42M4 20h42M4 29h42M4 38h42" stroke="#cfe9cf" />
      <path d="M11.500 26H18v15h-6.500z" fill="#e2304e" /><path d="M18.500 18H25v23h-6.500z" fill="#f58f1d" /><path d="M25.500 9H32v32h-6.500z" fill="#2fc236" /><path d="M32.500 14H39v27h-6.500z" fill="#1c7ee8" />
    </Icon>
  ),
  keynote: (
    <Icon>
      <rect x="4" y="4" width="42" height="42" rx="7" fill="#fbfdff" />
      <path d="M4 12h42M5 26h13v14H5zM20 26h11v14H20zM33 26h12v14H33z" fill="none" stroke="#bcd9f2" />
      <path d="M14 8h23l3 14H11z" fill="#1b7fe2" /><path d="M16 10h19l2 9H14z" fill="#5cb4f7" />
      <circle cx="25.500" cy="15.500" r="4.500" fill="#f6c637" /><path d="M25.500 11a4.500 4.500 0 010 9z" fill="#e5493b" /><path d="M25.500 15.500v4.500a4.500 4.500 0 01-4-3z" fill="#37b24d" />
      <path d="M25.500 22v20M18 42.500h15" stroke="#55585c" strokeWidth="1.800" />
    </Icon>
  ),
  pages: (
    <Icon>
      <rect x="4" y="4" width="42" height="42" rx="7" fill="#fffdfa" />
      <path d="M5 12h40M5 20h40M5 28h40M5 36h40" stroke="#f6dcbc" />
      <text x="7" y="29" fontSize="31" fontWeight="700" fill="#f2962a" fontFamily="Liberation Serif">“</text>
      <path d="M35 7.500l4.500 2L25 36l-4.500-2z" fill="#f39a26" stroke="#a35e10" strokeWidth=".8" /><path d="M20.500 33l5 2.500-3 5-3.500-1.700z" fill="#2c2f33" /><path d="M18.800 38.500l3.500 2-4.800 3z" fill="#777" />
    </Icon>
  ),
  appstore: (
    <Icon>
      <circle cx="25" cy="25" r="22.500" fill="url(#store)" />
      <path d="M27 11.500L13.500 35M23 11.500L36.500 35M10.500 30.500h18M33.500 30.500h6" stroke="#f4f8fd" strokeWidth="3.600" strokeLinecap="round" />
    </Icon>
  ),
  prefs: (
    <Icon>
      <rect x="2.500" y="4" width="45" height="43" rx="2" fill="url(#metal)" />
      <circle cx="25" cy="25.500" r="18" fill="#303337" /><circle cx="25" cy="25.500" r="15.500" fill="none" stroke="#a7aaad" strokeWidth="3" strokeDasharray="1.800 1.450" />
      <circle cx="25" cy="25.500" r="12.500" fill="none" stroke="#a7aaad" strokeWidth="2.800" />
      <path d="M25 25.500h12M25 25.500l-6-10.500M25 25.500L19 36" stroke="#a7aaad" strokeWidth="3" /><circle cx="25" cy="25.500" r="4" fill="#a7aaad" />
    </Icon>
  ),
  chrome: (
    <Icon>
      <rect x="3.500" y="4" width="43" height="43" rx="8" fill="#fbfbfb" />
      <path d="M25 25.500L9.400 16.500a18 18 0 0131.200 0z" fill="#e33b2e" /><path d="M9.400 16.500a18 18 0 0014 27L31 30z" fill="#2ba24c" /><path d="M40.600 16.500a18 18 0 01-17.200 27l9-18-7.400-9z" fill="#fcc31e" />
      <circle cx="25" cy="25.500" r="8.300" fill="#fff" /><circle cx="25" cy="25.500" r="6.500" fill="#3f7fee" />
    </Icon>
  ),
  slack: (
    <Icon>
      <circle cx="25" cy="25" r="23" fill="#fbfbfb" />
      <g strokeWidth="5.600" strokeLinecap="round" fill="none">
        <path d="M13 21h8.500M21.500 12.500v.2" stroke="#36c5f0" /><path d="M29 12.500V21M37 21h.1" stroke="#2eb67d" />
        <path d="M29 29h8.500M29 37.200v.1" stroke="#ecb22e" /><path d="M21.500 29v8.500M13 29h.1" stroke="#e01e5a" />
      </g>
    </Icon>
  ),
  vscode: (
    <Icon>
      <path d="M2 19l5-3.500L37 38v10L2 21z" fill="#1273bd" /><path d="M2 32l5 3.500L37 13V2L2 29z" fill="#1c86d4" /><path d="M36 2l11 5v36l-11 5.500z" fill="#2ea3ee" />
    </Icon>
  ),
  preview: (
    <Icon>
      <rect x="10" y="6" width="36" height="30" fill="#c2a068" stroke="#efe9db" strokeWidth="1.500" />
      <g transform="rotate(-7 22 28)">
        <rect x="2.500" y="11" width="38" height="33" fill="#f6f6f4" /><rect x="5" y="13.500" width="33" height="28" fill="#7eb2ea" />
        <path d="M5 26h33v8H5z" fill="#2a6299" /><path d="M5 33c10-3 22 1 33-1v9.500H5z" fill="#d8d2c6" /><path d="M5 24l12 2-12 4z" fill="#4b5348" />
      </g>
      <path d="M32 32h16v12c0 4-16 4-16 0z" fill="#6a5a4b" /><circle cx="38.500" cy="33" r="9" fill="#7d7567" stroke="#d7dcdf" strokeWidth="2" /><path d="M33 34l6-4 5 5z" fill="#c6bda9" />
    </Icon>
  ),
  certificate: (
    <Icon>
      <path d="M13 0h18l9 9v20H11z" fill="#f1f1ee" stroke="#cfcfca" strokeWidth=".6" />
      <path d="M4 10h33l9 8v29H4z" fill="#f6f8f7" stroke="#cfd6d8" strokeWidth=".6" /><path d="M4 10h34v2H4zM4 10h2v37H4zM4 45h42v2H4z" fill="#3d82c4" />
      <text x="8" y="26" fontSize="9" fontStyle="italic" fontFamily="Liberation Serif" fill="#222">Certificate</text>
      <text x="10" y="34" fontSize="6.500" fontStyle="italic" fontFamily="Liberation Serif" fill="#2c77b8">Standard</text>
      <path d="M12 39c4-4 8 3 15-1" stroke="#67a6d6" fill="none" /><circle cx="38" cy="37" r="6.500" fill="#d3d043" stroke="#a9a424" />
    </Icon>
  ),
  window: (
    <Icon>
      <path d="M0 11h50v30H0z" fill="#2b3743" /><path d="M0 11h50v4H0z" fill="#d9dddf" /><path d="M0 15h50v1.500H0z" fill="#17808c" /><path d="M0 16.500h5V40H0z" fill="#eceeee" />
      <path d="M5 17h45v6H5z" fill="#f4f6f6" /><path d="M16 19h10v18H16z" fill="#dce9f1" /><circle cx="41.500" cy="25.500" r="3.500" fill="#e2b735" />
      <rect x="33" y="34" width="16" height="16" rx="3" fill="#fbfbfb" /><circle cx="41" cy="42" r="6.500" fill="#2ba24c" /><path d="M41 42l-5.600-3.300a6.500 6.500 0 0111.200 0z" fill="#e33b2e" /><path d="M41 42l5.600-3.300A6.500 6.500 0 0141 48.500z" fill="#fcc31e" /><circle cx="41" cy="42" r="2.900" fill="#3f7fee" stroke="#fff" />
    </Icon>
  ),
  trash: (
    <Icon>
      <path d="M6 5l5-4 6 3 6-4 7 4 7-3 7 5-2 5H8z" fill="#e7eaea" /><path d="M12 6l5 4 5-5 5 5 6-5 4 4-3 3H14z" fill="#474d50" />
      <path d="M6 5c6 5 32 5 38 0l-5 40c-2 4-26 4-28 0z" fill="#e3e2e1" opacity=".95" />
      <path d="M12 12l3 32M20 13l1 34M30 13l-1 34M38 12l-3 32" stroke="#d2d1d0" strokeWidth="1.200" /><ellipse cx="25" cy="5" rx="19" ry="4" fill="none" stroke="#c9cccd" strokeWidth="1.300" />
    </Icon>
  ),
};

function DockItem({ name, running, badge }) {
  return (
    <div className="relative flex w-[57px] shrink-0 flex-col items-center pt-[7px]">
      {dockIcons[name]}
      {running && <i className="mt-[6px] h-1 w-1 rounded-full bg-black" />}
      {badge && <span className="absolute right-[1px] top-[7px] flex h-[19px] w-[19px] items-center justify-center rounded-full bg-[#fb3b37] text-[12px] text-white">{badge}</span>}
    </div>
  );
}

function Gradients() {
  const defs = [
    ["finder", "#1ac4fb", "#1d6cf2"], ["silver", "#cfdbdf", "#7b7f80"], ["safari", "#1dbdf0", "#1b5bd0"], ["sky", "#3c7fdc", "#8dc1f2"], ["green", "#3bea67", "#11bd30"],
    ["blue", "#3fb0fb", "#1674f4"], ["note", "#f5515f", "#3f8df5"], ["purple", "#c95cf0", "#7b22b8"], ["store", "#17b5fb", "#1558ee"], ["metal", "#c3ced6", "#6d6f70"],
  ];
  return (
    <svg className="absolute h-0 w-0">
      <defs>
        {defs.map(([id, a, b]) => (
          <linearGradient key={id} id={id} x1="0" y1="0" x2="0" y2="1"><stop stopColor={a} /><stop offset="1" stopColor={b} /></linearGradient>
        ))}
      </defs>
    </svg>
  );
}

function Desktop() {
  const first = ["finder", "launchpad", "safari", "mail", "facetime", "messages", "maps", "photos", "contacts", "calendar", "reminders", "notes", "music", "podcasts", "tv", "numbers", "keynote", "pages"];
  return (
    <div className="relative flex h-[69px] bg-linear-to-r from-[#04182c] to-[#0a1c2b]">
      <svg className="absolute inset-0 h-full w-full opacity-40">
        <filter id="waves" x="0" y="0" width="100%" height="100%">
          <feTurbulence type="fractalNoise" baseFrequency=".06 .24" numOctaves="4" seed="4" />
          <feColorMatrix values="0 0 0 0 .15  0 0 0 0 .28  0 0 0 0 .42  1.800 0 0 0 -.75" />
        </filter>
        <rect width="100%" height="100%" filter="url(#waves)" />
      </svg>
      <Gradients />
      <div className="relative ml-[161px] flex w-[1598px] rounded-t-[5px] bg-linear-to-r from-[#43617c] via-[#476071] to-[#4a647c] pl-[4px]">
        {first.map((n) => <DockItem key={n} name={n} running={n === "finder"} />)}
        <DockItem name="appstore" badge="2" />
        <DockItem name="prefs" badge="1" />
        <i className="ml-[12px] mr-[12px] mt-[9px] h-[51px] w-px bg-[#1f3245]" />
        {["chrome", "slack", "vscode", "preview"].map((n) => <DockItem key={n} name={n} running />)}
        <i className="ml-[12px] mr-[12px] mt-[9px] h-[51px] w-px bg-[#1f3245]" />
        {["certificate", "window", "trash"].map((n) => <DockItem key={n} name={n} />)}
      </div>
    </div>
  );
}

export default function App() {
  return (
    <div className="flex h-[1080px] w-[1920px] flex-col overflow-hidden bg-[#04172a] font-['Inter','Liberation_Sans',sans-serif]">
      <MenuBar />
      <div className="overflow-hidden rounded-t-[5px] bg-[#e6e6e6]">
        <TabStrip />
        <div className="bg-linear-to-b from-[#ebebeb] to-[#e1e1e1]">
          <Toolbar />
          <BookmarksBar />
        </div>
      </div>
      <div className="font-['Noto_Sans',sans-serif]">
        <AwsNav />
        <div className="flex h-[793px] overflow-hidden">
          <Sidebar />
          <Main />
        </div>
        <Footer />
      </div>
      <Desktop />
    </div>
  );
}
